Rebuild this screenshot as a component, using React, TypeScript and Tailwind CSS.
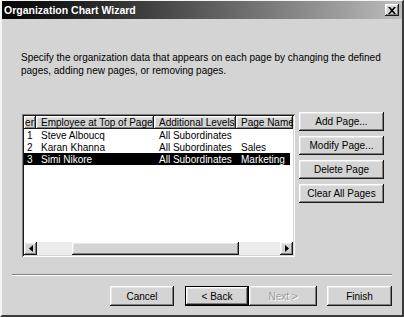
import React from "react";

const raised =
  "bg-[#d4d4d4] shadow-[inset_-1px_-1px_#1a1a1a,inset_1px_1px_#ffffff,inset_-2px_-2px_#808080,inset_2px_2px_#e6e6e6]";

function Btn({ label, className = "", disabled = false, def = false }: { label: string; className?: string; disabled?: boolean; def?: boolean }) {
  if (def) {
    return (
      <div className={`border border-black ${className}`}>
        <div className={`${raised} w-full h-full flex items-center justify-center`}>
          <span className="text-black">{label}</span>
        </div>
      </div>
    );
  }
  return (
    <div className={`${raised} flex items-center justify-center ${className}`}>
      <span className={disabled ? "text-[#9a9a9a] [text-shadow:1px_1px_#ffffff]" : "text-black"}>{label}</span>
    </div>
  );
}

function HeaderCell({ label, w }: { label: string; w: number }) {
  return (
    <div
      className={`${raised} h-full flex items-center pl-[5px] overflow-hidden whitespace-nowrap shrink-0`}
      style={{ width: w }}
    >
      {label}
    </div>
  );
}

const rows = [
  { n: "1", e: "Steve Alboucq", a: "All Subordinates", p: "" },
  { n: "2", e: "Karan Khanna", a: "All Subordinates", p: "Sales" },
  { n: "3", e: "Simi Nikore", a: "All Subordinates", p: "Marketing" },
];

export default function App() {
  return (
    <div
      className="w-[404px] h-[317px] bg-[#d4d4d4] text-[10px] leading-[13px] text-black overflow-hidden border-l-2 border-t border-l-[#f4f4f4] border-t-[#f4f4f4] border-r-2 border-b-2 border-r-[#3a3a3a] border-b-[#3a3a3a] flex flex-col"
      style={{ fontFamily: '"Liberation Sans", Arial, sans-serif' }}
    >
      {/* title bar */}
      <div className="h-[18px] shrink-0 flex items-center justify-between pl-[2px] pr-[3px] bg-gradient-to-r from-[#050505] via-[#5a5a5a] to-[#bdbdbd]">
        <span className="text-white font-bold text-[10.5px]">Organization Chart Wizard</span>
        <div className={`${raised} w-[14px] h-[12px] flex items-center justify-center`}>
          <svg width="8" height="7" viewBox="0 0 8 7">
            <path d="M0 0h2l2 2.2L6 0h2L5 3.5 8 7H6L4 4.8 2 7H0l3-3.5z" fill="#000" />
          </svg>
        </div>
      </div>

      {/* description */}
      <div className="mt-[32px] ml-[19px] w-[370px]">
        Specify the organization data that appears on each page by changing the defined pages, adding new pages, or removing pages.
      </div>

      {/* list + buttons */}
      <div className="flex items-start mt-[35px] ml-[20px]">
        <div className="w-[273px] h-[143px] mt-[2px] bg-white shadow-[inset_1px_1px_#808080,inset_-1px_-1px_#ffffff,inset_2px_2px_#1a1a1a,inset_-2px_-2px_#d4d4d4] p-[2px] flex flex-col">
          <div className="h-[13px] flex shrink-0">
            <div className={`${raised} h-full w-[12px] shrink-0 flex items-center justify-end pr-[2px] overflow-hidden`}>er</div>
            <HeaderCell label="Employee at Top of Page" w={118} />
            <HeaderCell label="Additional Levels" w={82} />
            <HeaderCell label="Page Name" w={57} />
          </div>
          <div className="flex-1 flex flex-col">
            {rows.map((r, i) => (
              <div
                key={r.n}
                className={`h-[12px] flex items-center whitespace-nowrap ${i === 2 ? "bg-black text-white w-[266px]" : ""}`}
              >
                <div className="w-[12px] shrink-0 pl-[3px]">{r.n}</div>
                <div className="w-[118px] shrink-0 pl-[5px]">{r.e}</div>
                <div className="w-[82px] shrink-0 pl-[5px]">{r.a}</div>
                <div className="w-[54px] shrink-0 pl-[5px]">{r.p}</div>
              </div>
            ))}
          </div>
          {/* horizontal scrollbar */}
          <div className="h-[13px] shrink-0 flex bg-[#ececec]">
            <div className={`${raised} w-[13px] h-full flex items-center justify-center`}>
              <svg width="4" height="7" viewBox="0 0 4 7"><path d="M4 0v7L0 3.5z" fill="#000" /></svg>
            </div>
            <div className="w-[35px]" />
            <div className={`${raised} w-[167px] h-full`} />
            <div className="flex-1" />
            <div className={`${raised} w-[13px] h-full flex items-center justify-center`}>
              <svg width="4" height="7" viewBox="0 0 4 7"><path d="M0 0v7l4-3.5z" fill="#000" /></svg>
            </div>
          </div>
        </div>

        <div className="ml-[4px] flex flex-col gap-[5px]">
          <Btn label="Add Page..." className="w-[85px] h-[19px]" />
          <Btn label="Modify Page..." className="w-[85px] h-[19px]" />
          <Btn label="Delete Page" className="w-[85px] h-[19px]" />
          <Btn label="Clear All Pages" className="w-[85px] h-[19px]" />
        </div>
      </div>

      {/* separator */}
      <div className="mt-[17px] ml-[10px] w-[380px] h-[2px] border-t border-t-[#808080] border-b border-b-white" />

      {/* bottom buttons */}
      <div className="flex mt-[10px] ml-[108px]">
        <Btn label="Cancel" className="w-[64px] h-[20px]" />
        <Btn label="< Back" def className="w-[64px] h-[20px] ml-[11px]" />
        <Btn label="Next >" disabled className="w-[68px] h-[20px]" />
        <Btn label="Finish" className="w-[65px] h-[20px] ml-[10px]" />
      </div>
    </div>
  );
}
